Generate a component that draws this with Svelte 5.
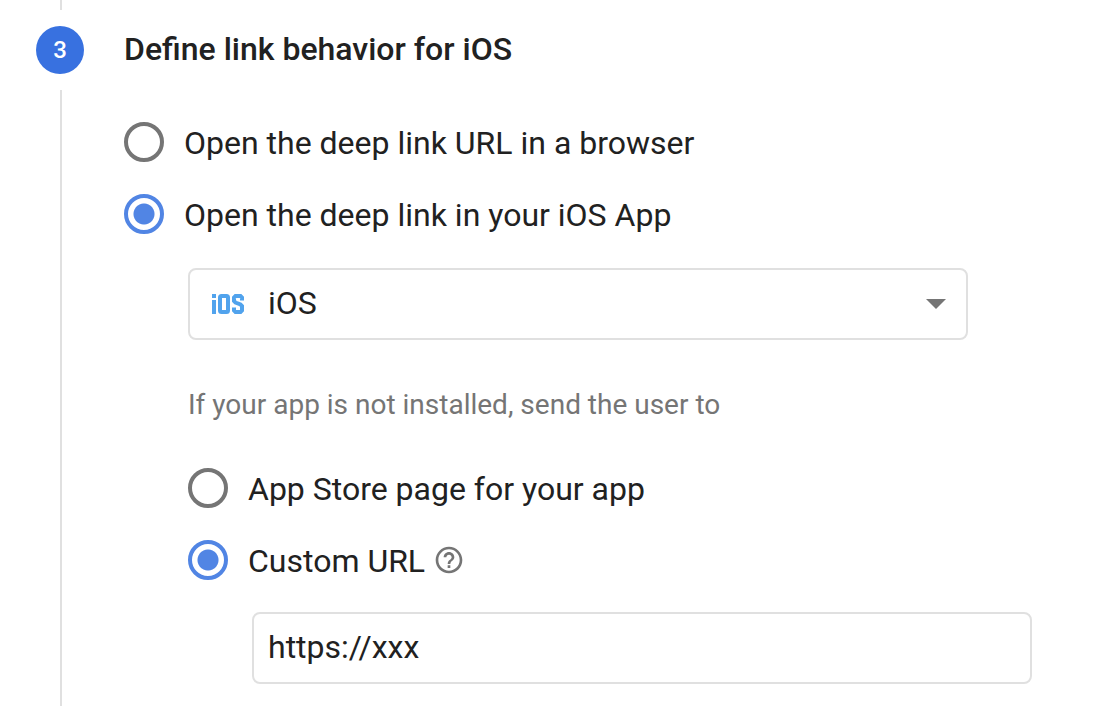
<script lang="ts">
	let behavior = $state('app');
	let fallback = $state('custom');
	let app = $state('ios');
	let customUrl = $state('https://xxx');
</script>

<section class="step">
	<div class="rail">
		<span class="line line-top"></span>
		<span class="marker">3</span>
		<span class="line line-rest"></span>
	</div>

	<div class="content">
		<h2>Define link behavior for iOS</h2>

		<div class="options" role="radiogroup" aria-label="Link behavior">
			<label class="option">
				<input type="radio" name="behavior" value="browser" bind:group={behavior} />
				<span>Open the deep link URL in a browser</span>
			</label>
			<label class="option">
				<input type="radio" name="behavior" value="app" bind:group={behavior} />
				<span>Open the deep link in your iOS App</span>
			</label>
		</div>

		<div class="nested">
			<div class="select-field">
				<svg class="ios-logo" viewBox="0 0 34 20" width="34" height="20" aria-hidden="true">
					<rect x="1" y="0" width="4" height="4" />
					<rect x="1" y="6" width="4" height="14" />
					<rect class="stroke" x="9" y="2" width="8" height="16" rx="1.500" />
					<path class="stroke" d="M31 6.500V3.500L29.500 2H24.500L23 3.500V7L24.500 8.500L29.500 10.500L31 12V16.500L29.500 18H24.500L23 16.500V13.500" />
				</svg>
				<select bind:value={app} aria-label="iOS app">
					<option value="ios">iOS</option>
				</select>
				<svg class="arrow" viewBox="0 0 20 10" width="20" height="10" aria-hidden="true">
					<path d="M0 0H20L10 10Z" />
				</svg>
			</div>

			<p id="fallback-label">If your app is not installed, send the user to</p>

			<div class="options" role="radiogroup" aria-labelledby="fallback-label">
				<label class="option">
					<input type="radio" name="fallback" value="store" bind:group={fallback} />
					<span>App Store page for your app</span>
				</label>
				<div class="option-row">
					<label class="option">
						<input type="radio" name="fallback" value="custom" bind:group={fallback} />
						<span>Custom URL</span>
					</label>
					<button type="button" class="help" aria-label="About custom URLs">
						<svg viewBox="0 0 24 24" width="32" height="32" aria-hidden="true">
							<path d="M11 18h2v-2h-2v2zm1-16C6.480 2 2 6.480 2 12s4.480 10 10 10 10-4.480 10-10S17.520 2 12 2zm0 18c-4.410 0-8-3.590-8-8s3.590-8 8-8 8 3.590 8 8-3.590 8-8 8zm0-14c-2.210 0-4 1.790-4 4h2c0-1.100.9-2 2-2s2 .9 2 2c0 2-3 1.750-3 5h2c0-2.250 3-2.500 3-5 0-2.210-1.790-4-4-4z" />
						</svg>
					</button>
				</div>
			</div>
		</div>

		<input class="url-input" type="text" bind:value={customUrl} aria-label="Custom URL" />
	</div>
</section>

<style>
	:global(body) {
		margin: 0;
		background: #fff;
	}
	.step {
		display: flex;
		gap: 40px;
		padding: 0 64px 0 36px;
		box-sizing: border-box;
		min-height: 100vh;
		font-family: Roboto, sans-serif;
		font-size: 32px;
		line-height: 40px;
		color: #212121;
	}
	.rail {
		display: flex;
		flex-direction: column;
		align-items: center;
		gap: 16px;
		width: 48px;
		flex-shrink: 0;
	}
	.line {
		width: 2px;
		margin-left: 2px;
		background: #e0e0e0;
	}
	.line-top {
		height: 10px;
	}
	.line-rest {
		flex: 1;
	}
	.marker {
		width: 48px;
		height: 48px;
		border-radius: 50%;
		background: #3871e0;
		color: #fff;
		font-size: 24px;
		font-weight: 500;
		line-height: 48px;
		text-align: center;
	}
	.content {
		flex: 1;
		min-width: 0;
		padding: 29px 0 22px;
	}
	h2 {
		margin: 0 0 53px;
		font-size: 32px;
		font-weight: 500;
		line-height: 40px;
	}
	.options {
		display: flex;
		flex-direction: column;
		align-items: flex-start;
		gap: 32px;
	}
	.option {
		display: flex;
		align-items: center;
		gap: 20px;
		cursor: pointer;
	}
	.option span {
		padding-top: 2px;
		line-height: 38px;
	}
	.option-row {
		display: flex;
		align-items: center;
		gap: 8px;
	}
	input[type='radio'] {
		appearance: none;
		box-sizing: border-box;
		width: 40px;
		height: 40px;
		margin: 0;
		flex-shrink: 0;
		border: 4px solid #757575;
		border-radius: 50%;
		cursor: pointer;
	}
	input[type='radio']:checked {
		border-color: #5185e4;
		background: radial-gradient(circle, #5185e4 10px, transparent 11px);
	}
	.nested {
		margin: 34px 64px 0;
	}
	.select-field {
		display: grid;
		grid-template-columns: 80px 1fr 40px;
		align-items: center;
	}
	.select-field select {
		grid-area: 1 / 1 / 2 / 4;
		appearance: none;
		box-sizing: border-box;
		width: 100%;
		height: 72px;
		padding: 0 64px 2px 78px;
		border: 2px solid #e0e0e0;
		border-radius: 8px;
		background: transparent;
		color: inherit;
		font: inherit;
		cursor: pointer;
	}
	.ios-logo {
		grid-area: 1 / 1;
		margin-left: 23px;
		fill: #51a3ed;
	}
	.ios-logo .stroke {
		fill: none;
		stroke: #51a3ed;
		stroke-width: 4;
	}
	.arrow {
		grid-area: 1 / 3;
		margin-left: -2px;
		fill: #757575;
		pointer-events: none;
	}
	p {
		margin: 45px 0 43px;
		font-size: 28px;
		line-height: 40px;
		color: #757575;
	}
	.help {
		display: flex;
		padding: 0;
		border: none;
		background: none;
		cursor: pointer;
	}
	.help svg {
		fill: #757575;
	}
	.url-input {
		display: block;
		box-sizing: border-box;
		width: calc(100% - 128px);
		height: 72px;
		margin: 32px 0 0 128px;
		padding: 0 14px 2px;
		border: 2px solid #e0e0e0;
		border-radius: 8px;
		background: #fff;
		color: inherit;
		font: inherit;
	}
</style>
